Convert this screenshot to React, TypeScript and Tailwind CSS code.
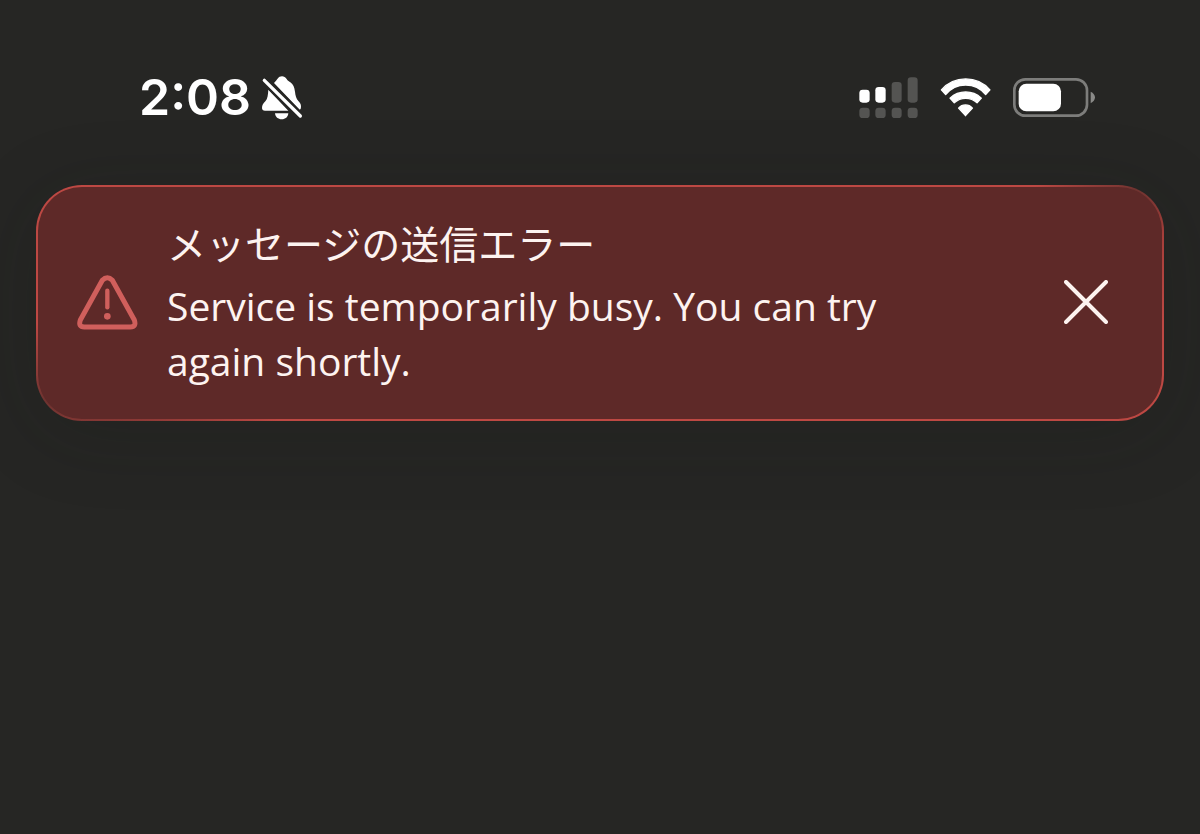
function BellSlashIcon() {
  return (
    <svg viewBox="390 45 126 135" className="h-[45px] w-[42px]" role="img" aria-label="Silent mode">
      <g fill="#fff">
        <path d="M429 69 C434 63 437 60 439 57 C443 51 448 49 453 49 C459 49 463 52 467 57 C469 61 473 64 478 67 C487 73 490 82 492 95 C493 107 496 116 502 123 C507 128 510 132 510 139 C510 145 509 149 506 149 Z" />
        <path d="M412 89 L472 152 L402 152 C396 152 393 149 393 144 C393 136 397 130 403 124 C410 117 411 104 412 89 Z" />
        <path d="M432 160 H472 C471 171 463 178 452 178 C441 178 433 171 432 160 Z" />
      </g>
      <path d="M400 61 L508 168" stroke="#262624" strokeWidth="23" fill="none" />
      <path d="M400 61 L508 168" stroke="#fff" strokeWidth="10" strokeLinecap="round" fill="none" />
    </svg>
  );
}

function SignalIcon() {
  return (
    <svg viewBox="30 33 177 126" className="h-[42px] w-[59px]" role="img" aria-label="Cellular signal">
      <g fill="#fff">
        <rect x="31" y="71" width="31" height="39" rx="10" />
        <rect x="79" y="63" width="31" height="47" rx="10" />
      </g>
      <g fill="#545452">
        <rect x="128" y="48" width="30" height="62" rx="10" />
        <rect x="176" y="34" width="30" height="76" rx="10" />
        <rect x="31" y="125" width="31" height="31" rx="10" />
        <rect x="79" y="125" width="31" height="31" rx="10" />
        <rect x="128" y="125" width="30" height="31" rx="10" />
        <rect x="176" y="125" width="30" height="31" rx="10" />
      </g>
    </svg>
  );
}

function WifiIcon() {
  return (
    <svg viewBox="270 36 154 118" className="h-[39px] w-[51px]" role="img" aria-label="Wi-Fi">
      <g fill="#fff" stroke="#fff" strokeWidth="4" strokeLinejoin="round">
        <path d="M274 72 A98 98 0 0 1 421 72 L408 86 A78 78 0 0 0 287 86 Z" />
        <path d="M300 97 A70 70 0 0 1 395 97 L382 111 A51 51 0 0 0 313 111 Z" />
        <path d="M326 127 A28 28 0 0 1 368 127 L347 150 Z" />
      </g>
    </svg>
  );
}

function BatteryIcon() {
  return (
    <svg viewBox="39 37 246 117" className="h-[39px] w-[82px]" role="img" aria-label="Battery">
      <rect x="43" y="41" width="218" height="109" rx="33" fill="none" stroke="#7d7d7b" strokeWidth="8" />
      <rect x="56" y="54" width="127" height="83" rx="23" fill="#fff" />
      <path d="M272 78 C280 82 285 88 285 95 C285 102 280 109 272 113 Z" fill="#8a8a88" />
    </svg>
  );
}

function WarningIcon() {
  return (
    <svg viewBox="172 319 181 165" className="h-[55px] w-[61px] shrink-0" fill="none" stroke="#d05f5c" aria-hidden="true">
      <path
        d="M247 335 Q262 319 277 335 L343 454 Q350 475 331 475 H193 Q174 475 181 454 Z"
        strokeWidth="15"
        strokeLinejoin="round"
      />
      <path d="M262 366 V416" strokeWidth="13" strokeLinecap="round" />
      <circle cx="262" cy="443" r="10" fill="#d05f5c" stroke="none" />
    </svg>
  );
}

function CloseIcon() {
  return (
    <svg viewBox="0 0 44 44" className="size-11" fill="none" stroke="#fdf3f0" strokeWidth="4" strokeLinecap="round" aria-hidden="true">
      <path d="M2 2 L42 42 M42 2 L2 42" />
    </svg>
  );
}

export default function App() {
  return (
    <div className="min-h-screen bg-[#262624] font-['Open_Sans','Noto_Sans_CJK_JP',sans-serif] text-[#fdf3f0]">
      <header className="flex items-center justify-between pt-[75px] pr-[105px] pl-[139px]">
        <div className="flex items-center gap-[10px] text-white">
          <time className="font-['Inter',sans-serif] text-[50px] leading-[45px] font-semibold">2:08</time>
          <BellSlashIcon />
        </div>
        <div className="flex items-center gap-[22px]">
          <SignalIcon />
          <WifiIcon />
          <BatteryIcon />
        </div>
      </header>

      <main className="px-9 pt-[65px]">
        <div
          role="alert"
          className="rounded-[46px] bg-[conic-gradient(#bd4843_0deg,#bd4843_75deg,#6e3330_78deg,#a53e3a_83deg,#bd4843_92deg,#bd4843_250deg,#8a3835_256deg,#6e3330_260deg,#bd4843_268deg,#bd4843_360deg)] p-[2px] shadow-[0_12px_80px_rgba(20,24,22,0.2)]"
        >
          <div className="flex items-center rounded-[44px] bg-[#5e2928] pt-[29px] pr-[54px] pb-[31px] pl-[39px]">
            <WarningIcon />
            <div className="ml-[29px] flex-1">
              <h1 className="text-[39px] leading-[55px] font-normal">メッセージの送信エラー</h1>
              <p className="mt-[7px] max-w-[760px] text-[39px] leading-[55px]">
                Service is temporarily busy. You can try again shortly.
              </p>
            </div>
            <button type="button" aria-label="Close" className="cursor-pointer">
              <CloseIcon />
            </button>
          </div>
        </div>
      </main>
    </div>
  );
}
